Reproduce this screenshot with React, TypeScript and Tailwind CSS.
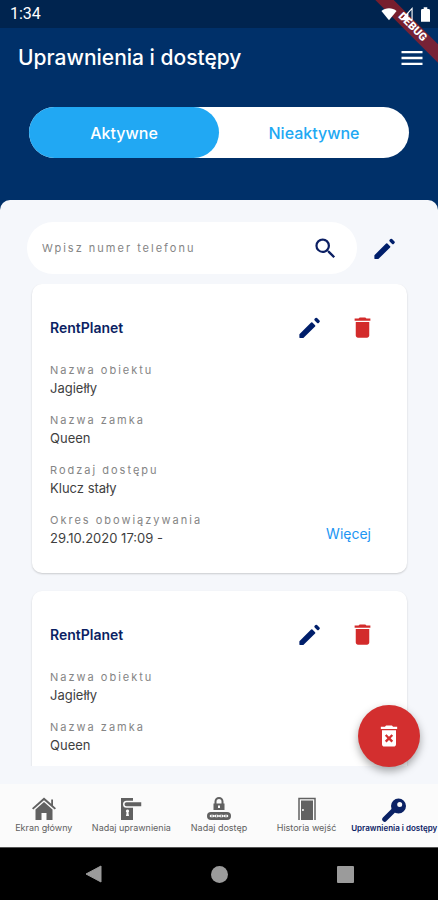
import { useState } from 'react'
import { MdDelete, MdDeleteForever, MdMenu, MdSearch } from 'react-icons/md'

const TABS = ['Aktywne', 'Nieaktywne']

const NAV_ITEMS = [
  { label: 'Ekran główny', icon: HomeIcon },
  { label: 'Nadaj uprawnienia', icon: HandleIcon },
  { label: 'Nadaj dostęp', icon: PinIcon },
  { label: 'Historia wejść', icon: DoorIcon },
  { label: 'Uprawnienia i dostępy', icon: KeyIcon },
]

interface Access {
  id: number
  owner: string
  fields: { label: string; value: string }[]
  hasDetails?: boolean
}

const ACCESSES: Access[] = [
  {
    id: 1,
    owner: 'RentPlanet',
    fields: [
      { label: 'Nazwa obiektu', value: 'Jagiełły' },
      { label: 'Nazwa zamka', value: 'Queen' },
      { label: 'Rodzaj dostępu', value: 'Klucz stały' },
      { label: 'Okres obowiązywania', value: '29.10.2020 17:09 -' },
    ],
    hasDetails: true,
  },
  {
    id: 2,
    owner: 'RentPlanet',
    fields: [
      { label: 'Nazwa obiektu', value: 'Jagiełły' },
      { label: 'Nazwa zamka', value: 'Queen' },
    ],
  },
]

function PencilIcon() {
  return (
    <svg viewBox="0 0 24 24" className="size-[27px]" aria-hidden="true">
      <path
        d="M3.800 18.300 14 8.100l2.400 2.400L6.200 20.600H3.800z"
        fill="currentColor"
        stroke="currentColor"
        strokeWidth="1.600"
        strokeLinejoin="round"
      />
      <path
        d="m17.300 5 .700-.700 2.200 2.200-.700.700z"
        fill="currentColor"
        stroke="currentColor"
        strokeWidth="2"
        strokeLinejoin="round"
      />
    </svg>
  )
}

function HomeIcon() {
  return (
    <svg viewBox="0 0 26 26" className="size-[26px] fill-current" aria-hidden="true">
      <path d="M13 1.5 1 12.2l1.3 1.3L13 4.2l10.7 9.3 1.3-1.3-3-2.7V3.5h-1.800v4.300z" />
      <path d="M13 6 4.5 13.4V24h6v-7h5v7h6V13.4z" />
    </svg>
  )
}

function HandleIcon() {
  return (
    <svg viewBox="0 0 26 26" className="size-[26px]" aria-hidden="true">
      <path fill="currentColor" d="M3 2h12v22H3z" />
      <path
        d="M8.500 5.500H24v5.500H8.500a2.750 2.750 0 0 1 0-5.500z"
        fill="currentColor"
        stroke="#fbfbfb"
        strokeWidth="1.500"
      />
      <path fill="#fbfbfb" d="M9.500 13.500a1.700 1.700 0 0 0-.9 3.100L8 20h3l-.6-3.400a1.700 1.700 0 0 0-.9-3.100z" />
    </svg>
  )
}

function PinIcon() {
  return (
    <svg viewBox="0 0 26 26" className="size-[26px]" aria-hidden="true">
      <path d="M9.500 8V5.500a3.500 3.500 0 0 1 7 0V8" fill="none" stroke="currentColor" strokeWidth="2" />
      <path fill="currentColor" fillRule="evenodd" d="M7.500 7.500h11V14h-11zM12 9.500v2.500h2V9.500z" />
      <rect x="1" y="16" width="24" height="8" rx="4" fill="currentColor" />
      <path d="M5 20h2M9.600 20h2M14.300 20h2M19 20h2" stroke="#fbfbfb" strokeWidth="2.600" strokeLinecap="round" />
      <path d="M5.500 20h1M10.100 20h1M14.800 20h1M19.500 20h1" stroke="currentColor" strokeWidth="1.500" />
    </svg>
  )
}

function DoorIcon() {
  return (
    <svg viewBox="0 0 26 26" className="size-[26px]" aria-hidden="true">
      <path d="M5 24V2.500h16V24" fill="none" stroke="currentColor" strokeWidth="1.500" />
      <path fill="currentColor" fillRule="evenodd" d="M7 4.500h12V24H7zM8.200 13v2h1.500v-2z" />
    </svg>
  )
}

function KeyIcon() {
  return (
    <svg viewBox="0 0 26 26" className="size-[26px]" aria-hidden="true">
      <path
        fill="currentColor"
        fillRule="evenodd"
        d="M17.500 2.500a7.500 7.500 0 1 1 0 15 7.500 7.500 0 0 1 0-15zM18.700 6a2.500 2.500 0 1 0 0 5 2.500 2.500 0 0 0 0-5z"
      />
      <path
        d="M13 14 3.700 23.300"
        fill="none"
        stroke="currentColor"
        strokeWidth="5"
        strokeLinecap="round"
      />
    </svg>
  )
}

function StatusBar() {
  return (
    <div className="flex h-7 items-center justify-between bg-[#00244f] pr-2 pl-[10px] font-[Roboto,sans-serif] text-base text-white">
      <span>1:34</span>
      <div className="relative z-10 flex items-center">
        <svg viewBox="0 0 18 14" className="mr-[3px] h-[14px] w-4 fill-white" aria-hidden="true">
          <path d="M9 14 .5 3.500C5-.6 13-.6 17.500 3.500z" />
        </svg>
        <svg viewBox="0 0 14 14" className="mr-2 h-[14px] w-[13px]" aria-hidden="true">
          <path d="M13 1v12H2z" fill="none" stroke="white" strokeWidth="1.200" />
          <path d="M9 5v8H2z" fill="white" />
        </svg>
        <svg viewBox="0 0 10 16" className="h-[15px] w-[9px] fill-white" aria-hidden="true">
          <path d="M3 0h4v2h1.500Q10 2 10 3.500V16H0V3.500Q0 2 1.500 2H3z" />
        </svg>
      </div>
    </div>
  )
}

function AccessCard({ access }: { access: Access }) {
  return (
    <article className="rounded-[10px] bg-white pt-[30px] pr-[31px] pb-[25px] pl-[18px] shadow-[0_1px_2px_rgba(0,0,0,0.18)]">
      <div className="mb-[21px] flex items-center">
        <h2 className="flex-1 text-sm font-semibold text-[#0b1f63]">{access.owner}</h2>
        <div className="flex gap-[26px]">
          <button aria-label="Edytuj" className="text-[#001f6b]">
            <PencilIcon />
          </button>
          <button aria-label="Usuń" className="text-[#d32b2b]">
            <MdDelete className="size-[27px]" />
          </button>
        </div>
      </div>
      <div className="flex items-end justify-between">
        <dl className="flex flex-col gap-[14px]">
          {access.fields.map(field => (
            <div key={field.label}>
              <dt className="text-[11px] leading-4 tracking-[2px] text-[#858585]">{field.label}</dt>
              <dd className="text-[13px] leading-5 text-[#3f3f3f]">{field.value}</dd>
            </div>
          ))}
        </dl>
        {access.hasDetails && (
          <a href="#wiecej" className="mr-[5px] pb-1 text-sm leading-5 text-[#2196f3]">
            Więcej
          </a>
        )}
      </div>
    </article>
  )
}

export default function App() {
  const [activeTab, setActiveTab] = useState(TABS[0])

  return (
    <div className="relative flex h-screen flex-col overflow-hidden bg-[#003069] font-[Inter,sans-serif]">
      <StatusBar />

      <header className="px-[29px] pb-[42px]">
        <div className="-mr-[17px] -ml-[11px] flex h-[60px] items-center justify-between text-white">
          <h1 className="text-[21px] font-medium">Uprawnienia i dostępy</h1>
          <button aria-label="Menu">
            <MdMenu className="size-7" />
          </button>
        </div>
        <div role="tablist" className="mt-[19px] flex h-[51px] rounded-full bg-white">
          {TABS.map(tab => (
            <button
              key={tab}
              role="tab"
              aria-selected={activeTab === tab}
              onClick={() => setActiveTab(tab)}
              className={`flex-1 rounded-full text-base font-medium ${
                activeTab === tab ? 'bg-[#21a8f3] text-white' : 'text-[#21a8f3]'
              }`}
            >
              {tab}
            </button>
          ))}
        </div>
      </header>

      <main className="relative flex min-h-0 flex-1 flex-col rounded-t-[10px] bg-[#f5f7fb] pt-[22px] pb-[18px]">
        {/* Search row */}
        <div className="flex items-center gap-[14px] pr-10 pl-[27px]">
          <div className="flex h-[52px] min-w-0 flex-1 items-center rounded-full bg-white pr-[18px] pl-[15px]">
            <input
              type="text"
              aria-label="Numer telefonu"
              placeholder="Wpisz numer telefonu"
              className="min-w-0 flex-1 text-[11px] tracking-[2px] outline-none placeholder:text-[#858585]"
            />
            <button aria-label="Szukaj" className="text-[#0b1f63]">
              <MdSearch className="size-[27px]" />
            </button>
          </div>
          <button aria-label="Edytuj" className="text-[#001f6b]">
            <PencilIcon />
          </button>
        </div>

        {/* Access list */}
        <div className="mt-[10px] flex min-h-0 flex-1 flex-col gap-[18px] overflow-y-auto pr-[31px] pl-8 [scrollbar-width:none] *:shrink-0">
          {ACCESSES.map(access => (
            <AccessCard key={access.id} access={access} />
          ))}
        </div>

        <button
          aria-label="Usuń wszystkie"
          className="absolute right-[18px] bottom-[17px] flex size-[62px] items-center justify-center rounded-full bg-[#d32f2f] text-white shadow-[0_4px_8px_rgba(0,0,0,0.35)]"
        >
          <MdDeleteForever className="size-7" />
        </button>
      </main>

      <nav className="grid h-[63px] grid-cols-5 bg-[#fbfbfb]">
        {NAV_ITEMS.map(({ label, icon: Icon }, i) => (
          <a
            key={label}
            href="#nav"
            className={`flex flex-col items-center pt-3 whitespace-nowrap ${
              i === NAV_ITEMS.length - 1 ? 'text-[8px] font-semibold text-[#0b2265]' : 'text-[9px] text-[#616161]'
            }`}
          >
            <Icon />
            <span className="leading-3">{label}</span>
          </a>
        ))}
      </nav>

      {/* System navigation */}
      <div className="flex h-[53px] items-center justify-center gap-[109px] border-t border-[#555] bg-black text-[#9b9b9b]">
        <svg viewBox="0 0 17 18" className="h-[18px] w-[17px] fill-current" aria-hidden="true">
          <path d="M16 1v16L1 9z" stroke="currentColor" strokeLinejoin="round" />
        </svg>
        <span className="size-[17px] rounded-full bg-current" />
        <span className="size-[17px] rounded-[1px] bg-current" />
      </div>

      {/* Corner ribbon */}
      <div className="pointer-events-none absolute top-[21px] -right-[34px] flex h-[13px] w-[120px] rotate-45 items-center justify-center bg-[#b71c1c]/65 font-[Roboto,sans-serif] text-[11px] font-black text-white">
        DEBUG
      </div>
    </div>
  )
}
